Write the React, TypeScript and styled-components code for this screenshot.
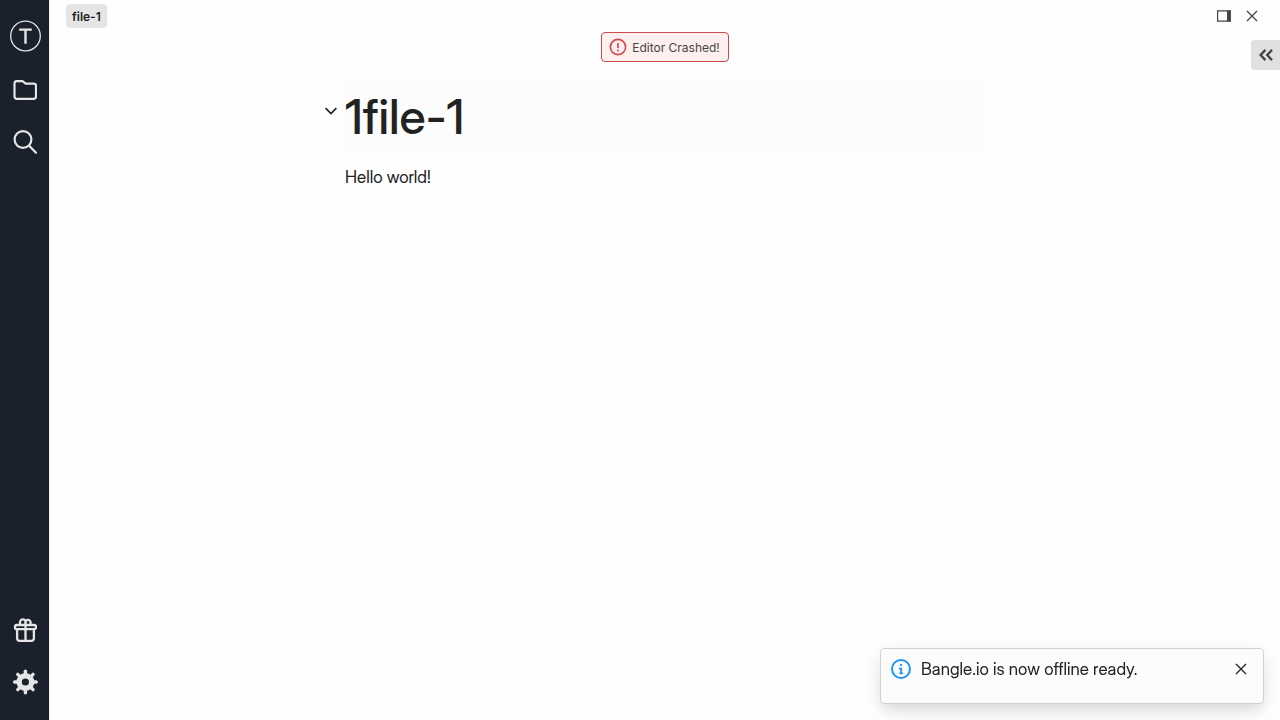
import React from 'react';
import styled, { createGlobalStyle } from 'styled-components';

const GlobalStyle = createGlobalStyle`
  *, *::before, *::after { box-sizing: border-box; }
  body {
    margin: 0;
    background: #fefefe;
    color: #222;
    font-family: "Inter Display", Inter, "Liberation Sans", sans-serif;
    font-size: 17px;
    line-height: 24px;
  }
  h1, p { margin: 0; }
`;

const Shell = styled.div`
  display: flex;
  min-height: 100vh;
`;

const Sidebar = styled.nav`
  display: flex;
  flex-direction: column;
  width: 50px;
  flex: none;
  padding: 8px 0 12px;
  background: #1a202c;
  border-right: 1px solid #ececf3;
`;

const Spacer = styled.div`
  flex: 1;
`;

const IconButton = styled.button`
  display: flex;
  align-items: center;
  justify-content: center;
  padding: 0;
  border: 0;
  background: none;
  color: inherit;
  cursor: pointer;
`;

const SidebarButton = styled(IconButton)<{ $tall?: boolean }>`
  width: 100%;
  height: ${({ $tall }) => ($tall ? 56 : 52)}px;
  padding-left: 1px;
  color: #e5e5e5;
`;

const Workspace = styled.main`
  display: flex;
  flex-direction: column;
  flex: 1;
  min-width: 0;
`;

const TopBar = styled.header`
  display: flex;
  align-items: center;
  justify-content: space-between;
  height: 32px;
  padding: 0 14px 0 16px;
`;

const FileTab = styled.button`
  height: 24px;
  padding: 1px 6px 0;
  border: 0;
  border-radius: 4px;
  background: #e5e5e5;
  color: #222;
  font: 600 12px/23px Inter, "Liberation Sans", sans-serif;
`;

const Actions = styled.div`
  display: flex;
  color: #444;
`;

const ActionButton = styled(IconButton)`
  width: 28px;
  height: 28px;
`;

const CrashRow = styled.div`
  display: flex;
  justify-content: center;
`;

const CrashButton = styled.button`
  display: flex;
  align-items: center;
  gap: 5px;
  height: 30px;
  padding: 0 8px 0 7px;
  border: 1px solid #c94a4a;
  border-radius: 4px;
  background: #fff0f0;
  color: #444;
  font: 400 12px/18px Inter, "Liberation Sans", sans-serif;
`;

const CrashLabel = styled.span`
  padding-top: 2px;
`;

const Article = styled.article`
  width: 100%;
  max-width: 640px;
  margin: 18px auto 0;
`;

const HeadingRow = styled.div`
  position: relative;
  background: #fcfcfc;
`;

const CollapseButton = styled(IconButton)`
  position: absolute;
  top: 19px;
  right: 100%;
  width: 28px;
  height: 24px;
`;

const Title = styled.h1`
  padding-top: 2px;
  font-size: 48px;
  font-weight: 500;
  line-height: 70px;
`;

const Paragraph = styled.p`
  margin-top: 13px;
`;

const PanelToggle = styled(IconButton)`
  position: fixed;
  top: 40px;
  right: 0;
  width: 29px;
  height: 30px;
  border-radius: 4px 0 0 4px;
  background: #e0e0e0;
  color: #444;
`;

const Toast = styled.div`
  position: fixed;
  right: 16px;
  bottom: 16px;
  display: flex;
  align-items: flex-start;
  width: 384px;
  height: 56px;
  padding: 8px 10px;
  border: 1px solid #d1d1d1;
  border-radius: 4px;
  background: #fcfcfc;
  box-shadow: 0 10px 15px -3px rgba(0, 0, 0, 0.1), 0 4px 20px rgba(0, 0, 0, 0.07);
`;

const ToastIcon = styled.span`
  display: flex;
  align-items: center;
  height: 24px;
`;

const ToastText = styled.p`
  flex: 1;
  margin-left: 10px;
`;

const ToastClose = styled(IconButton)`
  width: 24px;
  height: 24px;
`;

const LogoIcon = () => (
  <svg width="32" height="32" viewBox="0 0 32 32" fill="none" stroke="currentColor" aria-hidden="true">
    <circle cx="16.5" cy="16" r="14.8" strokeWidth="1.3" />
    <path d="M10.2 9.6h12.6M16.5 9.6v14.2" strokeWidth="2.4" />
  </svg>
);

const FolderIcon = () => (
  <svg width="24" height="20" viewBox="0 0 24 20" fill="none" stroke="currentColor" strokeWidth="2.2" strokeLinejoin="round" aria-hidden="true">
    <path d="M3.5 1.2h6l3.2 2.5h8.1a2.2 2.2 0 0 1 2.2 2.2v10.7a2.2 2.2 0 0 1-2.2 2.2H3.7a2.2 2.2 0 0 1-2.2-2.2V3.4a2.2 2.2 0 0 1 2-2.2z" />
  </svg>
);

const SearchIcon = () => (
  <svg width="24" height="24" viewBox="0 0 24 24" fill="none" stroke="currentColor" strokeWidth="2.2" strokeLinecap="round" aria-hidden="true">
    <circle cx="10" cy="9.5" r="8.4" />
    <path d="m16.2 15.7 6.8 7" />
  </svg>
);

const GiftIcon = () => (
  <svg width="24" height="24" viewBox="0 0 24 24" fill="none" stroke="currentColor" strokeWidth="2.3" strokeLinejoin="round" aria-hidden="true">
    <rect x="2" y="7" width="21" height="4.2" rx="1.8" />
    <path d="M4.1 11.2v9.2a2.4 2.4 0 0 0 2.4 2.4h12a2.4 2.4 0 0 0 2.4-2.4v-9.2M12.5 4.5v18.3" />
    <path d="M7.5 6.8C6.1 4.4 7.2 1.7 9.6 1.4c1.9-.2 2.9 1 2.9 3 0-1.6 1-2.6 2.5-2.6 2.1 0 3.4 2.3 2.2 5" />
  </svg>
);

const GearIcon = () => (
  <svg width="26" height="26" viewBox="0 0 26 26" fill="none" stroke="currentColor" aria-hidden="true">
    <circle cx="13.4" cy="13" r="6.3" strokeWidth="5.4" />
    {[0, 45, 90, 135, 180, 225, 270, 315].map((angle) => (
      <path key={angle} d="M13.4 5.5V2.2" strokeWidth="3.4" strokeLinecap="round" transform={`rotate(${angle} 13.4 13)`} />
    ))}
  </svg>
);

const SecondaryPaneIcon = () => (
  <svg width="14" height="12" viewBox="0 0 14 12" fill="none" stroke="currentColor" aria-hidden="true">
    <path d="M.6.9h12.8v10.2H.6z" strokeWidth="1.2" />
    <path d="M10 .5h3.5v11H10z" fill="currentColor" stroke="none" />
  </svg>
);

const CloseIcon = () => (
  <svg width="12" height="12" viewBox="0 0 12 12" fill="none" stroke="currentColor" strokeWidth="1.3" aria-hidden="true">
    <path d="m1 1 10 10M11 1 1 11" />
  </svg>
);

const AlertIcon = () => (
  <svg width="18" height="18" viewBox="0 0 18 18" fill="none" stroke="#d04848" aria-hidden="true">
    <circle cx="9" cy="9" r="7.6" strokeWidth="1.6" />
    <path d="M9 4.9v5M9 11.6v1.6" strokeWidth="1.6" />
  </svg>
);

const InfoIcon = () => (
  <svg width="20" height="20" viewBox="0 0 20 20" fill="none" stroke="#2196f3" aria-hidden="true">
    <circle cx="10" cy="10" r="9" strokeWidth="2" />
    <path d="M10 5v2M8 9.6h2.2v4.7M8.4 14.3H12" strokeWidth="1.8" />
  </svg>
);

const ChevronIcon = () => (
  <svg width="12" height="8" viewBox="0 0 12 8" fill="none" stroke="currentColor" strokeWidth="1.7" aria-hidden="true">
    <path d="m.6 1.2 5.4 5.3 5.4-5.3" />
  </svg>
);

const DoubleChevronIcon = () => (
  <svg width="14" height="12" viewBox="0 0 14 12" fill="none" stroke="currentColor" strokeWidth="2.3" aria-hidden="true">
    <path d="M6.4.9 1.6 6l4.8 5.1M13 .9 8.2 6l4.8 5.1" />
  </svg>
);

export default function App() {
  return (
    <>
      <GlobalStyle />
      <Shell>
        <Sidebar aria-label="Activity bar">
          <SidebarButton $tall aria-label="Home"><LogoIcon /></SidebarButton>
          <SidebarButton aria-label="Files"><FolderIcon /></SidebarButton>
          <SidebarButton aria-label="Search"><SearchIcon /></SidebarButton>
          <Spacer />
          <SidebarButton aria-label="What's new"><GiftIcon /></SidebarButton>
          <SidebarButton aria-label="Settings"><GearIcon /></SidebarButton>
        </Sidebar>
        <Workspace>
          <TopBar>
            <FileTab>file-1</FileTab>
            <Actions>
              <ActionButton aria-label="Split screen"><SecondaryPaneIcon /></ActionButton>
              <ActionButton aria-label="Close editor"><CloseIcon /></ActionButton>
            </Actions>
          </TopBar>
          <CrashRow>
            <CrashButton><AlertIcon /><CrashLabel>Editor Crashed!</CrashLabel></CrashButton>
          </CrashRow>
          <Article>
            <HeadingRow>
              <CollapseButton aria-label="Collapse section"><ChevronIcon /></CollapseButton>
              <Title>1file-1</Title>
            </HeadingRow>
            <Paragraph>Hello world!</Paragraph>
          </Article>
        </Workspace>
      </Shell>
      <PanelToggle aria-label="Open side panel"><DoubleChevronIcon /></PanelToggle>
      <Toast role="status">
        <ToastIcon><InfoIcon /></ToastIcon>
        <ToastText>Bangle.io is now offline ready.</ToastText>
        <ToastClose aria-label="Dismiss"><CloseIcon /></ToastClose>
      </Toast>
    </>
  );
}
